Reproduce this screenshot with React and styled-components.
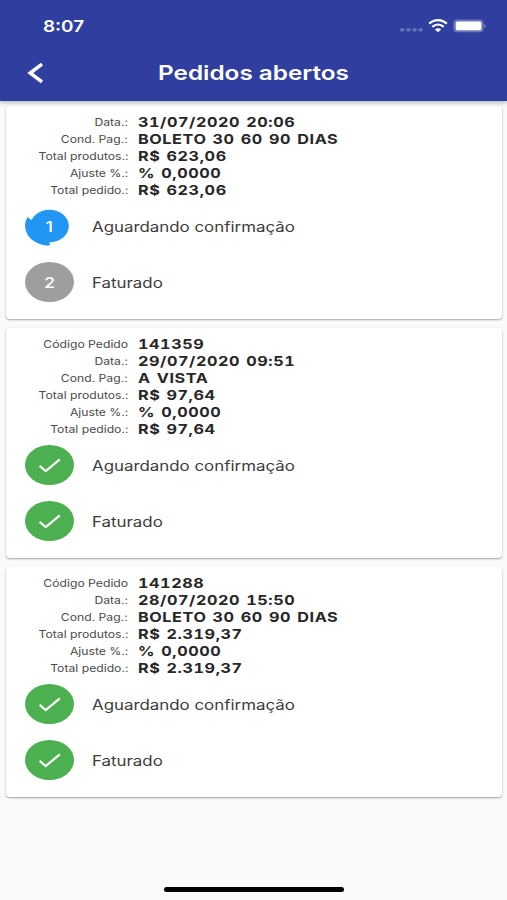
import React from "react";
import styled, { createGlobalStyle } from "styled-components";

const orders = [
  {
    fields: [
      ["Data.:", "31/07/2020 20:06"],
      ["Cond. Pag.:", "BOLETO 30 60 90 DIAS"],
      ["Total produtos.:", "R$ 623,06"],
      ["Ajuste %.:", "% 0,0000"],
      ["Total pedido.:", "R$ 623,06"],
    ],
    steps: [
      { name: "Aguardando confirmação", status: "active" },
      { name: "Faturado", status: "pending" },
    ],
  },
  {
    fields: [
      ["Código Pedido", "141359"],
      ["Data.:", "29/07/2020 09:51"],
      ["Cond. Pag.:", "A VISTA"],
      ["Total produtos.:", "R$ 97,64"],
      ["Ajuste %.:", "% 0,0000"],
      ["Total pedido.:", "R$ 97,64"],
    ],
    steps: [
      { name: "Aguardando confirmação", status: "done" },
      { name: "Faturado", status: "done" },
    ],
  },
  {
    fields: [
      ["Código Pedido", "141288"],
      ["Data.:", "28/07/2020 15:50"],
      ["Cond. Pag.:", "BOLETO 30 60 90 DIAS"],
      ["Total produtos.:", "R$ 2.319,37"],
      ["Ajuste %.:", "% 0,0000"],
      ["Total pedido.:", "R$ 2.319,37"],
    ],
    steps: [
      { name: "Aguardando confirmação", status: "done" },
      { name: "Faturado", status: "done" },
    ],
  },
];

function StatusIcons() {
  return (
    <svg width="88" height="16" viewBox="0 0 88 16">
      <g fill="#fff" fillOpacity="0.25">
        <rect x="1" y="10" width="4.4" height="3.6" rx="1.6" />
        <rect x="7.2" y="10" width="4.4" height="3.6" rx="1.6" />
        <rect x="13.4" y="10" width="4.4" height="3.6" rx="1.6" />
        <rect x="19.4" y="10" width="4.4" height="3.6" rx="1.6" />
      </g>
      <g fill="none" stroke="#fff" strokeWidth="2.3">
        <path d="M30.2 5.6C35.3 0.9 42.7 0.9 47.8 5.6" />
        <path d="M33.3 8.9C36.7 5.9 41.3 5.9 44.7 8.9" />
      </g>
      <path d="M35.9 11.4C37.8 9.9 40.2 9.9 42.1 11.4L39 14.2Z" fill="#fff" />
      <rect x="54.4" y="1.6" width="30.2" height="12.6" rx="4" fill="#fff" fillOpacity="0.3" />
      <rect x="56.8" y="3.5" width="25.6" height="8.8" rx="1.6" fill="#fff" />
      <path d="M85.4 6C87.4 6.7 87.4 9.3 85.4 10Z" fill="#fff" fillOpacity="0.4" />
    </svg>
  );
}

function StepBadge({ status, number }) {
  if (status === "active") {
    return (
      <Badge>
        <svg width="49" height="40" viewBox="0 0 49 40">
          <ellipse cx="24.5" cy="20" rx="19.3" ry="16.3" fill="#2196f3" />
          <path d="M24.7 39.6A24.2 19.8 0 0 1 2.6 11L5.6 13.6L24.5 20Z" fill="#2196f3" />
        </svg>
        <BadgeNumber>{number}</BadgeNumber>
      </Badge>
    );
  }

  if (status === "done") {
    return (
      <Badge $color="#4caf50">
        <svg width="49" height="40" viewBox="0 0 49 40">
          <path d="M14.6 20.8L20.7 26L34.8 14.4" fill="none" stroke="#fff" strokeWidth="2.2" />
        </svg>
      </Badge>
    );
  }

  return (
    <Badge $color="#9e9e9e">
      <BadgeNumber>{number}</BadgeNumber>
    </Badge>
  );
}

function OrderCard({ order }) {
  return (
    <Card>
      {order.fields.map(([label, value]) => (
        <Field key={label}>
          <Label>{label}</Label>
          <Value>{value}</Value>
        </Field>
      ))}
      <Steps>
        {order.steps.map((step, index) => (
          <Step key={step.name}>
            <StepBadge status={step.status} number={index + 1} />
            <StepName>{step.name}</StepName>
          </Step>
        ))}
      </Steps>
    </Card>
  );
}

function App() {
  return (
    <Screen>
      <GlobalStyle />
      <Header>
        <StatusBar>
          <Clock>8:07</Clock>
          <StatusIcons />
        </StatusBar>
        <TitleBar>
          <BackButton aria-label="Voltar">
            <svg width="18" height="22" viewBox="0 0 18 22">
              <path d="M15 2.2L3.2 11L15 19.8" fill="none" stroke="#fff" strokeWidth="3.5" />
            </svg>
          </BackButton>
          <Title>Pedidos abertos</Title>
        </TitleBar>
      </Header>
      <OrderList>
        {orders.map((order, index) => (
          <OrderCard key={index} order={order} />
        ))}
      </OrderList>
      <Footer>
        <HomeIndicator />
      </Footer>
    </Screen>
  );
}

export default App;

const GlobalStyle = createGlobalStyle`
  body {
    margin: 0;
    background-color: #fafafa;
    font-family: Inter, "Liberation Sans", sans-serif;
  }
`;

const Screen = styled.div`
  display: flex;
  flex-direction: column;
  height: 900px;
  overflow: hidden;
  background-color: #fafafa;
`;

const Header = styled.header`
  flex: none;
  height: 101px;
  box-sizing: border-box;
  background-color: #303f9f;
  color: #fff;
  box-shadow: 0 1px 5px rgba(0, 0, 0, 0.35);
  z-index: 1;
`;

const StatusBar = styled.div`
  display: flex;
  justify-content: space-between;
  align-items: center;
  height: 52px;
  padding: 0 20px 0 43px;
  box-sizing: border-box;
`;

/* the wide lettering comes from stretching Inter sideways */
const Wide = styled.span`
  display: block;
  white-space: nowrap;
  transform-origin: left center;
`;

const Clock = styled(Wide)`
  font-size: 16px;
  font-weight: 600;
  transform: scaleX(1.18);
`;

const TitleBar = styled.div`
  display: grid;
  grid-template-columns: 60px 1fr 60px;
  align-items: center;
  height: 42px;
`;

const BackButton = styled.button`
  display: flex;
  padding: 0 0 0 27px;
  border: 0;
  background: none;
`;

const Title = styled.h1`
  margin: 0;
  text-align: center;
  white-space: nowrap;
  font-size: 20px;
  font-weight: 600;
  transform: scaleX(1.215);
`;

const OrderList = styled.main`
  flex: 1;
  display: flex;
  flex-direction: column;
  gap: 9px;
  padding: 5px 5px 0 6px;
`;

const Card = styled.section`
  padding: 7px 0 17px;
  border-radius: 4px;
  background-color: #fff;
  box-shadow: 0 1px 2px rgba(0, 0, 0, 0.36);
`;

const Field = styled.div`
  display: grid;
  grid-template-columns: 122px 1fr;
  column-gap: 10px;
  align-items: center;
  height: 17px;
`;

const Label = styled(Wide)`
  justify-self: end;
  transform-origin: right center;
  transform: scaleX(1.16);
  padding-top: 1px;
  font-size: 10.5px;
  color: #4a4a4a;
`;

const Value = styled(Wide)`
  justify-self: start;
  transform: scaleX(1.2);
  font-size: 13.5px;
  font-weight: 700;
  font-variant-numeric: tabular-nums;
  letter-spacing: 0.48px;
  word-spacing: 1px;
  color: #272727;
`;

const Steps = styled.div`
  display: flex;
  flex-direction: column;
  gap: 16px;
  padding: 8px 0 0 19px;
`;

const Step = styled.div`
  display: flex;
  align-items: center;
  gap: 18px;
  height: 40px;
`;

const Badge = styled.div`
  display: grid;
  place-items: center;
  width: 49px;
  height: 40px;
  border-radius: 50%;
  background-color: ${(props) => props.$color || "transparent"};

  > * {
    grid-area: 1 / 1;
  }
`;

const BadgeNumber = styled.span`
  z-index: 1;
  font-size: 15px;
  font-weight: 500;
  color: #fff;
  transform: scaleX(1.2);
`;

const StepName = styled(Wide)`
  transform: scaleX(1.205);
  font-size: 14px;
  color: #3c3c3c;
`;

const Footer = styled.footer`
  display: flex;
  justify-content: center;
  padding: 0 0 8px 1px;
`;

const HomeIndicator = styled.div`
  width: 180px;
  height: 5px;
  border-radius: 3px;
  background-color: #000;
`;
